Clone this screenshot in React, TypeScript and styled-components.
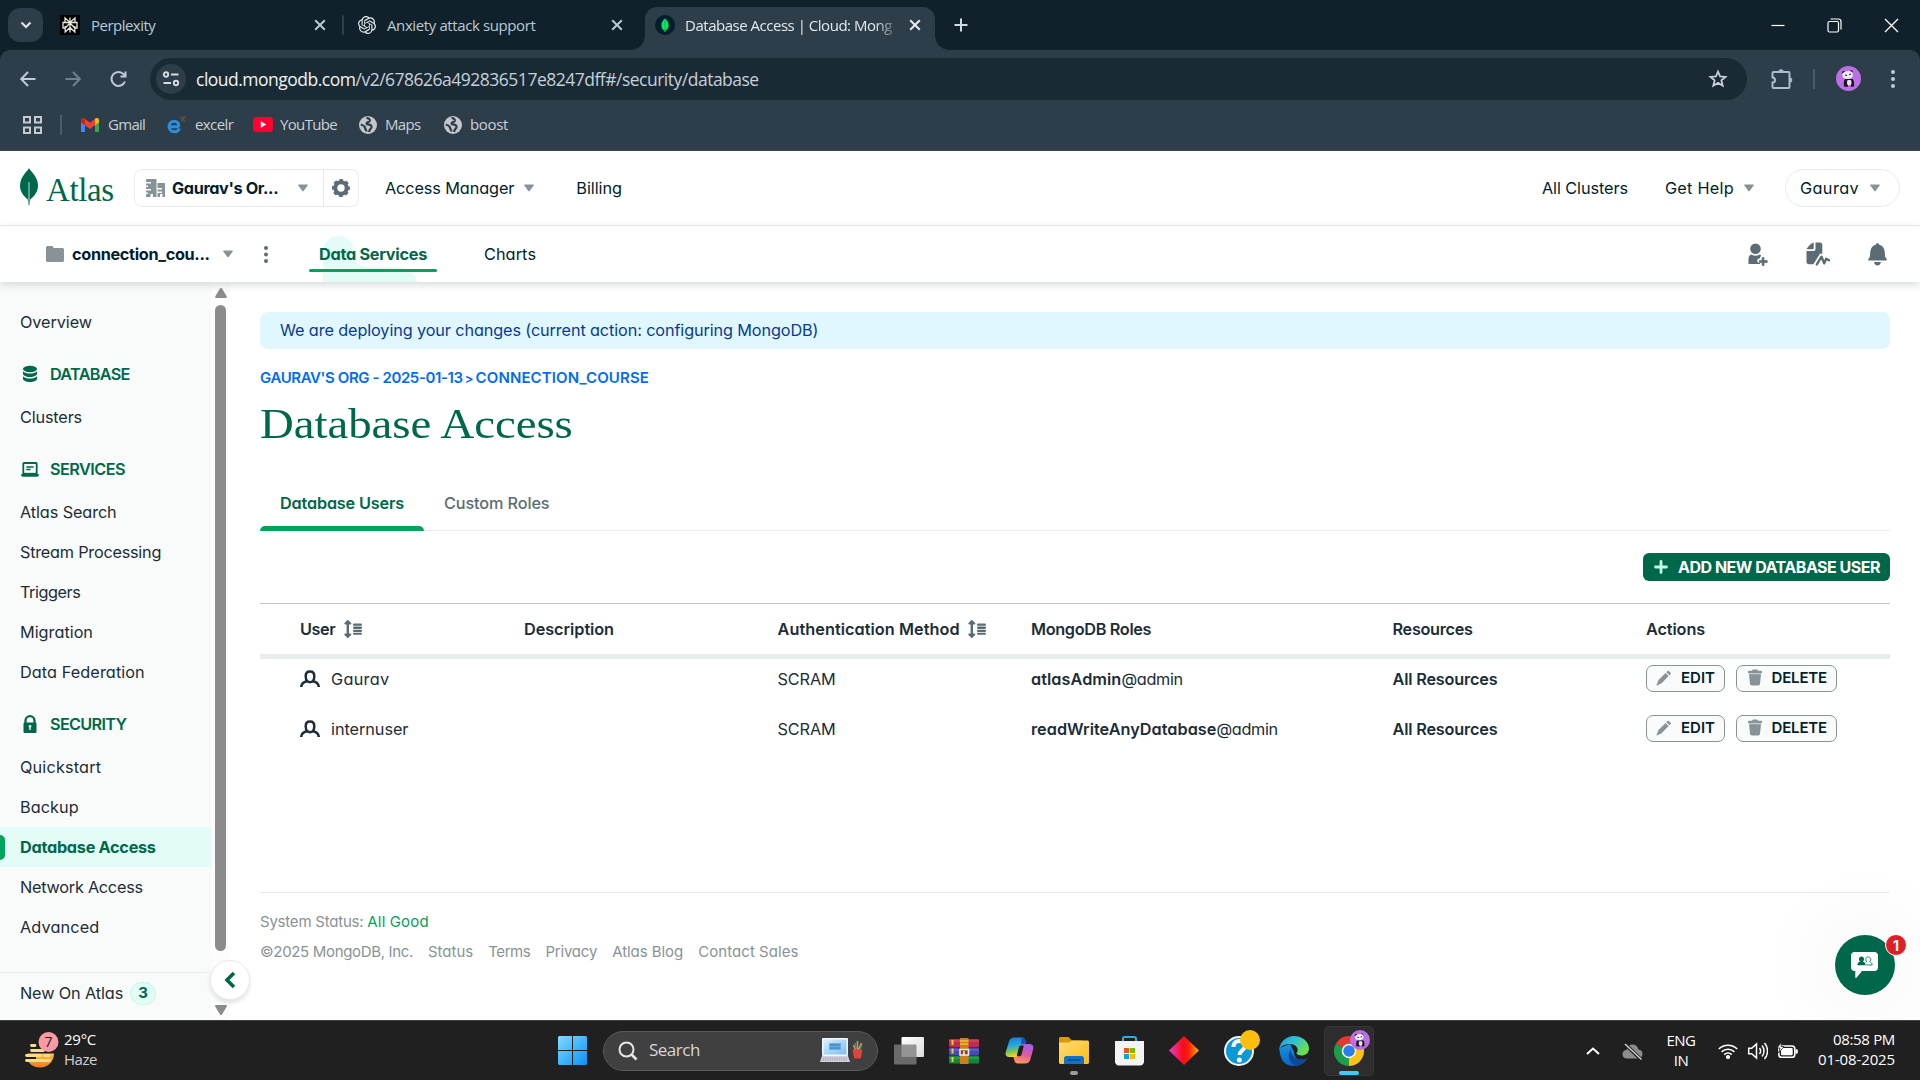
import React from "react";
import styled, { createGlobalStyle } from "styled-components";

const sans = `Inter, "Liberation Sans", sans-serif`;
const ui = `"Open Sans", "Noto Sans", sans-serif`;

const color = {
  ink: "#001e2b",
  body: "#1c2d38",
  green: "#00684a",
  brightGreen: "#00a35c",
  mint: "#e3fcf7",
  gray: "#5c6c75",
  lightGray: "#889397",
  line: "#e8edeb",
};

const GlobalStyle = createGlobalStyle`
  * { box-sizing: border-box; }
  body { margin: 0; background: #fff; overflow: hidden; }
  svg { display: block; flex: none; }
`;

const Screen = styled.div`
  width: 1920px;
  height: 1080px;
  display: flex;
  flex-direction: column;
  overflow: hidden;
  font-family: ${sans};
  font-size: 16.25px;
  color: ${color.ink};
  white-space: nowrap;
`;

const Text = styled.span<{ $ls?: number; $w?: number; $c?: string }>`
  font-feature-settings: "cv11";
  letter-spacing: ${(p) => p.$ls ?? 0}px;
  ${(p) => p.$w && `font-weight: ${p.$w};`}
  ${(p) => p.$c && `color: ${p.$c};`}
`;

/* ---------- browser ---------- */

const TabStrip = styled.div`
  height: 50px;
  flex: none;
  display: flex;
  align-items: flex-end;
  background: #10212b;
  font: 15px ${ui};
  color: #b9c9d6;
`;

const TabSearch = styled.div`
  width: 35px;
  height: 34px;
  margin: 0 10px 8px 8px;
  border-radius: 12px;
  background: #2d3d49;
  display: grid;
  place-items: center;
`;

const Tab = styled.div<{ $width: number; $active?: boolean }>`
  position: relative;
  width: ${(p) => p.$width}px;
  height: 43px;
  padding: 0 12px 7px 7px;
  display: flex;
  align-items: center;
  border-radius: 12px 12px 0 0;
  background: ${(p) => (p.$active ? "#2d3d49" : "transparent")};
  color: ${(p) => (p.$active ? "#e3e8ec" : "#b9c9d6")};
  &::before,
  &::after {
    content: "";
    display: ${(p) => (p.$active ? "block" : "none")};
    position: absolute;
    bottom: 0;
    width: 14px;
    height: 14px;
  }
  &::before {
    left: -14px;
    background: radial-gradient(circle at 0 0, transparent 13.5px, #2d3d49 14px);
  }
  &::after {
    right: -14px;
    background: radial-gradient(circle at 100% 0, transparent 13.5px, #2d3d49 14px);
  }
`;

const TabTitle = styled.span<{ $ls: number; $fade?: boolean }>`
  flex: 1;
  margin-left: ${(p) => (p.$fade ? 10 : 11)}px;
  letter-spacing: ${(p) => p.$ls}px;
  ${(p) => p.$fade && "mask-image: linear-gradient(90deg, #000 85%, transparent 96%);"}
`;

const TabDivider = styled.div`
  width: 2px;
  height: 20px;
  margin-bottom: 15px;
  border-radius: 1px;
  background: #2d3d49;
`;

const NewTab = styled.div`
  padding: 0 0 18px 19px;
`;

const WindowButtons = styled.div`
  margin-left: auto;
  padding: 0 21px 17px 0;
  display: flex;
  align-items: center;
  gap: 42px;
`;

const ToolbarBack = styled.div`
  background: #10212b;
  flex: none;
`;

const Toolbar = styled.div`
  height: 58px;
  padding: 0 17px 0 17px;
  display: flex;
  align-items: center;
  background: #2d3d49;
  border-radius: 10px 10px 0 0;
`;

const NavButtons = styled.div`
  width: 133px;
  display: flex;
  gap: 23px;
`;

const AddressBar = styled.div`
  width: 1597px;
  height: 42px;
  padding: 0 19px 0 6px;
  display: flex;
  align-items: center;
  border-radius: 21px;
  background: #1a2a35;
  font: 17.5px ${ui};
  color: #c5d0d8;
`;

const SiteInfo = styled.div`
  width: 30px;
  height: 30px;
  margin-right: 10px;
  border-radius: 50%;
  background: #2d3d49;
  display: grid;
  place-items: center;
`;

const Url = styled.span`
  flex: 1;
  letter-spacing: -0.5px;
  b {
    font-weight: 400;
    color: #eef2f4;
  }
`;

const ToolbarActions = styled.div`
  flex: 1;
  margin-left: 22px;
  padding-bottom: 1px;
  display: flex;
  align-items: center;
`;

const ToolbarDivider = styled.div<{ $m: string }>`
  width: 2px;
  height: 20px;
  margin: ${(p) => p.$m};
  background: #4b5b67;
`;

const Bookmarks = styled.div`
  height: 43px;
  flex: none;
  padding: 0 0 9px 23px;
  display: flex;
  align-items: center;
  background: #2d3d49;
  border-bottom: 1px solid #3c4450;
  font: 15px ${ui};
  color: #c9d1d8;
`;

const Bookmark = styled.div<{ $width: number; $gap?: number }>`
  width: ${(p) => p.$width}px;
  display: flex;
  align-items: center;
  gap: ${(p) => p.$gap ?? 9}px;
  span {
    padding-bottom: 2px;
  }
`;

/* ---------- Atlas header ---------- */

const OrgBar = styled.header`
  height: 75px;
  flex: none;
  padding: 0 20px;
  display: flex;
  align-items: center;
  border-bottom: 1px solid ${color.line};
`;

const Brand = styled.div`
  width: 114px;
  display: flex;
  align-items: center;
  gap: 8px;
  font: 33px/34px "Liberation Serif", serif;
  color: ${color.green};
  svg {
    margin-bottom: 3px;
  }
  span {
    padding-top: 4px;
  }
`;

const OrgPicker = styled.div`
  width: 225px;
  height: 38px;
  display: flex;
  border: 1px solid ${color.line};
  border-radius: 8px;
`;

const OrgName = styled.div`
  width: 189px;
  padding: 0 15px 0 11px;
  display: flex;
  align-items: center;
  gap: 6px;
  border-right: 1px solid ${color.line};
  svg:last-child {
    margin-left: auto;
  }
`;

const OrgSettings = styled.div`
  flex: 1;
  display: grid;
  place-items: center;
`;

const MenuItem = styled.div<{ $ml: number; $gap?: number }>`
  margin-left: ${(p) => p.$ml}px;
  display: flex;
  align-items: center;
  gap: ${(p) => p.$gap ?? 9}px;
`;

const OrgRight = styled.div`
  margin-left: auto;
  display: flex;
  align-items: center;
`;

const UserPill = styled.div`
  width: 115px;
  height: 38px;
  margin-left: 31px;
  padding: 0 19px 0 14px;
  display: flex;
  align-items: center;
  justify-content: space-between;
  border: 1px solid ${color.line};
  border-radius: 19px;
`;

const ProjectBar = styled.nav`
  position: relative;
  z-index: 1;
  height: 56px;
  flex: none;
  padding: 0 33px 0 46px;
  display: flex;
  align-items: stretch;
  background: #fff;
  box-shadow: 0 3px 8px rgba(0, 30, 43, 0.16);
`;

const ProjectPicker = styled.div`
  width: 187px;
  display: flex;
  align-items: center;
  gap: 8px;
  svg:last-child {
    margin-left: auto;
  }
`;

const ProjectMenu = styled.div`
  width: 76px;
  padding-left: 31px;
  display: flex;
  align-items: center;
`;

const ServiceTab = styled.div<{ $active?: boolean }>`
  position: relative;
  width: ${(p) => (p.$active ? 128 : 98)}px;
  margin-left: ${(p) => (p.$active ? 0 : 24)}px;
  display: flex;
  align-items: center;
  justify-content: center;
  color: ${(p) => (p.$active ? color.green : color.ink)};
  &::after {
    content: "";
    display: ${(p) => (p.$active ? "block" : "none")};
    position: absolute;
    left: 0;
    right: 0;
    bottom: 10px;
    height: 3px;
    border-radius: 2px;
    background: ${color.brightGreen};
  }
  span {
    position: relative;
  }
`;

const Blob = styled.svg`
  position: absolute;
  left: 14px;
  bottom: 0;
`;

const ProjectIcons = styled.div`
  margin-left: auto;
  display: flex;
  align-items: center;
  gap: 38px;
  color: ${color.gray};
`;

/* ---------- body ---------- */

const Body = styled.div`
  flex: 1;
  min-height: 0;
  display: flex;
`;

const Sidebar = styled.aside`
  width: 211px;
  display: flex;
  flex-direction: column;
  padding-top: 20px;
  background: #f9fbfa;
`;

const SideItem = styled.a<{ $active?: boolean }>`
  height: 40px;
  flex: none;
  padding-left: 20px;
  display: flex;
  align-items: center;
  position: relative;
  background: ${(p) => (p.$active ? color.mint : "transparent")};
  color: ${(p) => (p.$active ? color.green : color.body)};
  font-weight: ${(p) => (p.$active ? 700 : 400)};
  &::before {
    content: "";
    display: ${(p) => (p.$active ? "block" : "none")};
    position: absolute;
    left: 0;
    width: 5px;
    height: 25px;
    border-radius: 0 6px 6px 0;
    background: ${color.brightGreen};
  }
`;

const SideHeading = styled.div`
  height: 55px;
  flex: none;
  padding: 9px 0 0 20px;
  display: flex;
  align-items: center;
  gap: 10px;
  font-weight: 600;
  color: ${color.green};
`;

const SideFooter = styled.div`
  flex: 1;
  margin-top: 25px;
  padding: 7px 0 0 20px;
  border-top: 1px solid ${color.line};
  display: flex;
  gap: 7px;
  line-height: 27px;
  color: ${color.body};
`;

const CountBadge = styled.span`
  width: 26px;
  height: 23px;
  margin-top: 2px;
  border: 1px solid #c0fae6;
  border-radius: 12px;
  background: ${color.mint};
  color: ${color.green};
  font-size: 15px;
  font-weight: 700;
  line-height: 20px;
  text-align: center;
`;

const ScrollTrack = styled.div`
  position: relative;
  width: 19px;
  padding: 6px 0 5px;
  display: flex;
  flex-direction: column;
  align-items: center;
  background: #fcfcfc;
`;

const ScrollThumb = styled.div`
  width: 11px;
  height: 646px;
  margin: 7px 0 54px;
  border-radius: 6px;
  background: #8b8b8b;
`;

const Collapse = styled.div`
  position: absolute;
  left: -1px;
  top: 678px;
  width: 40px;
  height: 40px;
  border: 1px solid ${color.line};
  border-radius: 50%;
  background: #fff;
  box-shadow: 0 3px 4px rgba(0, 30, 43, 0.12);
  display: grid;
  place-items: center;
`;

const Main = styled.main`
  flex: 1;
  padding: 30px 30px 0 30px;
  display: flex;
  flex-direction: column;
  color: ${color.body};
`;

const Banner = styled.div`
  height: 37px;
  padding: 0 0 1px 20px;
  display: flex;
  align-items: center;
  border-radius: 8px;
  background: #e1f7ff;
  color: #083c90;
`;

const Breadcrumb = styled.div`
  height: 18px;
  margin-top: 20px;
  display: flex;
  line-height: 18px;
  font-size: 15px;
  font-weight: 600;
  color: #016bf8;
`;

const Crumb = styled(Text)`
  &:nth-child(2) {
    width: 13px;
    font-size: 13px;
    text-align: center;
  }
`;

const Title = styled.h1`
  align-self: flex-start;
  height: 50px;
  margin: 13px 0 0;
  font: 400 42px/49px "Liberation Serif", serif;
  color: ${color.green};
  transform: scaleX(1.113);
  transform-origin: left;
`;

const Tabs = styled.div`
  height: 54px;
  margin-top: 27px;
  display: flex;
  border-bottom: 1px solid ${color.line};
`;

const PageTab = styled.div<{ $active?: boolean }>`
  height: 54px;
  padding: 0 20px;
  line-height: 52px;
  font-weight: ${(p) => (p.$active ? 600 : 500)};
  color: ${(p) => (p.$active ? color.green : color.gray)};
  position: relative;
  &::after {
    content: "";
    display: ${(p) => (p.$active ? "block" : "none")};
    position: absolute;
    left: 0;
    right: 0;
    bottom: 0;
    height: 5px;
    border-radius: 5px 5px 0 0;
    background: ${color.brightGreen};
  }
`;

const AddButton = styled.button`
  align-self: flex-end;
  width: 247px;
  height: 28px;
  margin: 22px 0 22px;
  padding: 0 10px 0 11px;
  display: flex;
  align-items: center;
  justify-content: space-between;
  border: 0;
  border-radius: 6px;
  background: ${color.green};
  color: #fff;
  font: 700 16px ${sans};
  white-space: nowrap;
`;

const GridRow = styled.div`
  display: grid;
  grid-template-columns: 224px 253.5px 253.5px 361.5px 253.5px 1fr;
  align-items: center;
  height: 50px;
  padding-left: 40px;
`;

const HeadRow = styled(GridRow)`
  height: 56px;
  padding-bottom: 0;
  border-top: 1px solid #c1c7c6;
  border-bottom: 5px solid ${color.line};
  font-weight: 600;
`;

const Table = styled.div`
  flex: none;
  height: 290px;
  border-bottom: 1px solid ${color.line};
`;

const Rows = styled.div`
  margin-top: -5px;
`;

const Cell = styled.div<{ $gap?: number }>`
  display: flex;
  align-items: center;
  gap: ${(p) => p.$gap ?? 0}px;
`;

const RowButton = styled.button<{ $width: number }>`
  width: ${(p) => p.$width}px;
  height: 27px;
  margin-top: -2px;
  padding: 0 9px 1px 9px;
  display: flex;
  align-items: center;
  justify-content: space-between;
  border: 1px solid ${color.lightGray};
  border-radius: 7px;
  background: #f9fbfa;
  color: ${color.ink};
  font: 600 15px ${sans};
`;

const Footer = styled.footer`
  padding-top: 14px;
  font-size: 15px;
  line-height: 30px;
  color: ${color.lightGray};
`;

const FooterLinks = styled.div`
  display: flex;
  gap: 15px;
`;

const Chat = styled.div`
  position: absolute;
  left: 1835px;
  top: 935px;
  width: 60px;
  height: 60px;
  border-radius: 50%;
  background: ${color.green};
  box-shadow: 0 0 90px rgba(0, 0, 0, 0.1);
  display: grid;
  place-items: center;
`;

const ChatBadge = styled.div`
  position: absolute;
  left: 50px;
  top: -1px;
  width: 22px;
  height: 22px;
  border: 1px solid #fff;
  border-radius: 50%;
  background: #df1f26;
  color: #fff;
  font-size: 14px;
  font-weight: 700;
  line-height: 21px;
  text-align: center;
`;

/* ---------- taskbar ---------- */

const Taskbar = styled.div`
  position: relative;
  z-index: 2;
  height: 60px;
  flex: none;
  display: flex;
  align-items: center;
  border-top: 1px solid #3b4144;
  background: #202020;
  color: #fff;
  font: 15px/20px ${ui};
`;

const Weather = styled.div`
  width: 558px;
  padding-left: 24px;
  display: flex;
  align-items: center;
  gap: 4px;
`;

const WeatherText = styled.div`
  padding-bottom: 4px;
  display: flex;
  flex-direction: column;
  font-size: 15px;
`;

const SearchBox = styled.div`
  width: 275px;
  height: 40px;
  margin: 0 1px 0 16px;
  padding: 0 13px 0 14px;
  display: flex;
  align-items: center;
  border: 1px solid #585858;
  border-radius: 20px;
  background: #404040;
  font-size: 17px;
  color: #d6d6d6;
  svg:last-child {
    margin-left: auto;
  }
  span {
    margin: 0 0 1px 11px;
  }
`;

const AppIcon = styled.div<{ $active?: boolean; $run?: string }>`
  position: relative;
  width: 50px;
  height: 50px;
  margin-left: 5px;
  display: grid;
  place-items: center;
  border-radius: 5px;
  border: 1px solid ${(p) => (p.$active ? "#363636" : "transparent")};
  background: ${(p) => (p.$active ? "#2d2d2d" : "transparent")};
  &::after {
    content: "";
    display: ${(p) => (p.$run ? "block" : "none")};
    position: absolute;
    bottom: 0;
    width: ${(p) => (p.$active ? 20 : 8)}px;
    height: 4px;
    border-radius: 2px;
    background: ${(p) => p.$run};
  }
`;

const Tray = styled.div`
  margin-left: auto;
  padding-right: 25px;
  display: flex;
  align-items: center;
`;

const TrayText = styled.div<{ $align: string; $ml: number; $up: number }>`
  width: ${(p) => (p.$align === "right" ? 97 : 40)}px;
  margin-left: ${(p) => p.$ml}px;
  padding-bottom: ${(p) => p.$up}px;
  display: flex;
  flex-direction: column;
  text-align: ${(p) => p.$align};
`;

const Spacer = styled.span<{ $w: number }>`
  flex: none;
  width: ${(p) => p.$w}px;
`;

/* ---------- icons ---------- */

const CloseIcon = ({ c = "#b9c9d6" }) => (
  <svg width="12" height="12" viewBox="0 0 12 12" stroke={c} strokeWidth="2">
    <path d="M1.2 1.2l9.6 9.6M10.8 1.2L1.2 10.8" />
  </svg>
);

const Caret = () => (
  <svg width="10" height="8" viewBox="0 0 10 8" fill={color.lightGray}>
    <path d="M.8.5h8.4c.6 0 .9.6.5 1.1L5.6 7.1a.8.8 0 0 1-1.2 0L.3 1.6C-.1 1.1.2.5.8.5z" />
  </svg>
);

const Dots = ({ c, h = 18 }: { c: string; h?: number }) => (
  <svg width="4" height={h} viewBox={`0 0 4 ${h}`} fill={c}>
    <circle cx="2" cy="2" r="2" />
    <circle cx="2" cy={h / 2} r="2" />
    <circle cx="2" cy={h - 2} r="2" />
  </svg>
);

const PerplexityIcon = () => (
  <svg width="20" height="20" viewBox="0 0 20 20">
    <rect width="20" height="20" rx="1" fill="#000" />
    <path
      d="M10 2.500v15M5 3l5 4.500L15 3v4.500H5zM5 7.500H3V13h2.200L10 8l4.800 5H17V7.500h-2M5.200 11v6L10 12.500l4.800 4.500v-6"
      fill="none"
      stroke="#e8e6da"
      strokeWidth="1.300"
    />
  </svg>
);

const OpenAIIcon = () => (
  <svg width="18" height="18" viewBox="0 0 24 24" fill="#e4ebef">
    <path d="M22.282 9.821a5.985 5.985 0 0 0-.516-4.910 6.046 6.046 0 0 0-6.510-2.900A6.065 6.065 0 0 0 4.981 4.180a5.985 5.985 0 0 0-3.998 2.900 6.046 6.046 0 0 0 .743 7.097 5.980 5.980 0 0 0 .510 4.911 6.051 6.051 0 0 0 6.515 2.900A5.985 5.985 0 0 0 13.260 24a6.056 6.056 0 0 0 5.772-4.206 5.990 5.990 0 0 0 3.997-2.900 6.056 6.056 0 0 0-.747-7.073zM13.260 22.430a4.476 4.476 0 0 1-2.876-1.040l.141-.081 4.779-2.758a.795.795 0 0 0 .392-.681v-6.737l2.020 1.168a.071.071 0 0 1 .038.052v5.583a4.504 4.504 0 0 1-4.494 4.494zM3.600 18.304a4.470 4.470 0 0 1-.535-3.014l.142.085 4.783 2.759a.771.771 0 0 0 .780 0l5.843-3.369v2.332a.080.080 0 0 1-.033.062L9.740 19.950a4.500 4.500 0 0 1-6.140-1.646zM2.340 7.896a4.485 4.485 0 0 1 2.366-1.973V11.600a.766.766 0 0 0 .388.676l5.815 3.355-2.020 1.168a.076.076 0 0 1-.071 0l-4.830-2.786A4.504 4.504 0 0 1 2.340 7.872zm16.597 3.855l-5.833-3.387L15.119 7.200a.076.076 0 0 1 .071 0l4.830 2.791a4.494 4.494 0 0 1-.676 8.105v-5.678a.790.790 0 0 0-.407-.667zm2.010-3.023l-.141-.085-4.774-2.782a.776.776 0 0 0-.785 0L9.409 9.230V6.897a.066.066 0 0 1 .028-.061l4.830-2.787a4.500 4.500 0 0 1 6.680 4.660zm-12.640 4.135l-2.020-1.164a.080.080 0 0 1-.038-.057V6.075a4.500 4.500 0 0 1 7.375-3.453l-.142.080L8.704 5.460a.795.795 0 0 0-.393.681zm1.097-2.365l2.602-1.500 2.607 1.500v2.999l-2.597 1.500-2.607-1.500z" />
  </svg>
);

const MongoFavicon = () => (
  <svg width="20" height="20" viewBox="0 0 20 20">
    <circle cx="10" cy="10" r="10" fill="#001e2b" />
    <path d="M10 3.300c2.200 2.300 3.600 4.500 3.600 7 0 2.300-1.200 4.200-3.100 5.500l-.2 1.200h-.6l-.2-1.200c-1.900-1.300-3.100-3.200-3.100-5.500 0-2.500 1.400-4.700 3.600-7z" fill="#00ed64" />
    <path d="M10 4v13" stroke="#00a651" strokeWidth=".8" />
  </svg>
);

const GlobeIcon = () => (
  <svg width="18" height="18" viewBox="0 0 18 18">
    <circle cx="9" cy="9" r="9" fill="#c3c7ca" />
    <path d="M7.500 1.800c2 .3 3.800 1.300 3.300 3.200-.5 1.500-2.800.8-3.200 2.300-.2 1 .8 1.400 2.200 1.400 1.800 0 3 .9 2.700 2.500-.3 1.700-2.200 1.600-2.400 4.800M1.800 8.500c1.800.6 4.200 1.500 4.200 3.200 0 1.200 1.600 1.800 1.300 3.800" fill="none" stroke="#2d3d49" strokeWidth="2.200" />
  </svg>
);

const SortIcon = () => (
  <svg width="18" height="18" viewBox="0 0 18 18" fill={color.gray}>
    <path d="M4.400.3a.8.8 0 0 0-1.200 0L.5 3.100c-.5.5-.1 1.300.6 1.300h1.500v9.200H1.100c-.7 0-1.100.8-.6 1.300l2.700 2.800c.3.400.9.400 1.200 0l2.700-2.800c.5-.5.100-1.300-.6-1.300H5V4.400h1.500c.7 0 1.100-.8.600-1.300z" />
    <rect x="9" y="3.500" width="9" height="2.300" rx="1.100" />
    <rect x="9" y="6.600" width="9" height="2.300" rx="1.100" />
    <rect x="9" y="9.700" width="9" height="2.300" rx="1.100" />
    <rect x="9" y="12.800" width="9" height="1.900" rx=".9" />
  </svg>
);

const UserIcon = () => (
  <svg width="20" height="18" viewBox="0 0 20 18" fill="none" stroke={color.body} strokeWidth="2.500">
    <path d="M1.200 17c.3-3.700 2.900-5.200 6.200-5.700C6 10 5.700 8.300 5.700 6.200 5.700 3.300 7.500 1.500 10 1.500s4.300 1.800 4.300 4.700c0 2.100-.3 3.800-1.700 5.100 3.300.5 5.900 2 6.200 5.700M7.400 11.300c1.500 1 3.700 1 5.200 0" />
  </svg>
);

const PencilIcon = () => (
  <svg width="16" height="16" viewBox="0 0 16 16" fill={color.lightGray}>
    <path d="M11.500 1.100a1 1 0 0 1 1.400 0l1.700 1.700a1 1 0 0 1 0 1.400l-1.100 1.100-3.100-3.100zM9.600 3l3.100 3.100-7.100 7.100L1 15.400a.4.4 0 0 1-.5-.5l2-4.800z" />
  </svg>
);

const TrashIcon = () => (
  <svg width="14" height="17" viewBox="0 0 14 17">
    <path d="M1 5h12l-1 9.800c-.1 1-.9 1.700-1.800 1.700H3.800c-.9 0-1.700-.7-1.800-1.700z" fill={color.lightGray} />
    <path d="M0 2.900c0-.7.5-1.200 1.200-1.200h2.600L5 .5h4l1.200 1.200h2.600c.7 0 1.200.5 1.200 1.200V4H0z" fill={color.lightGray} />
    <path d="M.8 4h12.400v1.300H.8z" fill="#c5cccd" />
  </svg>
);

const Panda = ({ r }: { r: number }) => (
  <svg width={r * 2} height={r * 2} viewBox="0 0 26 26">
    <circle cx="13" cy="13" r="13" fill="#bb6fe4" />
    <path d="M9.500 13.500h8c1.300 1.500 1.700 5 1 8h-3v-2h-3v2h-4c-.8-3-.5-6.500 1-8z" fill="#1d1620" />
    <rect x="11.500" y="14.500" width="4.500" height="5.500" rx="1.500" fill="#e9e4ea" />
    <circle cx="8" cy="6.800" r="1.600" fill="#1d1620" />
    <circle cx="16" cy="5.800" r="1.400" fill="#1d1620" />
    <path d="M7 7.500c2-2 7-3 9.500-1.500 1.500 2 1.300 5-.5 6.500-2.500 1.300-6 1.300-8 0C6.500 11.500 6.300 9 7 7.500z" fill="#efebf0" />
    <path d="M9.500 9.300l2 .6M15.500 8.300l-1.600.9" stroke="#1d1620" strokeWidth="1.200" />
  </svg>
);

/* ---------- data ---------- */

type Entry = { label: string; ls: number; active?: boolean };
const groups: { title?: string; ls?: number; icon?: string; items: Entry[] }[] = [
  { items: [{ label: "Overview", ls: -0.08 }] },
  { title: "DATABASE", ls: -0.72, icon: "db", items: [{ label: "Clusters", ls: -0.16 }] },
  {
    title: "SERVICES",
    ls: -0.55,
    icon: "services",
    items: [
      { label: "Atlas Search", ls: -0.1 },
      { label: "Stream Processing", ls: -0.24 },
      { label: "Triggers", ls: -0.45 },
      { label: "Migration", ls: 0.0 },
      { label: "Data Federation", ls: 0.08 },
    ],
  },
  {
    title: "SECURITY",
    ls: -0.68,
    icon: "lock",
    items: [
      { label: "Quickstart", ls: 0.17 },
      { label: "Backup", ls: 0.05 },
      { label: "Database Access", ls: -0.28, active: true },
      { label: "Network Access", ls: -0.25 },
      { label: "Advanced", ls: 0.14 },
    ],
  },
];

const users = [
  { name: "Gaurav", nameLs: 0.3, role: "atlasAdmin", roleLs: 0.06, domainLs: -0.32 },
  { name: "internuser", nameLs: -0.05, role: "readWriteAnyDatabase", roleLs: 0.02, domainLs: -0.32 },
];

const HeadingIcon = ({ kind }: { kind?: string }) => {
  if (kind === "db")
    return (
      <svg width="20" height="18" viewBox="0 0 20 18" fill={color.green}>
        <ellipse cx="10" cy="4" rx="7" ry="3.300" />
        <path d="M3 6.200c1.500 1.700 4 2.300 7 2.300s5.500-.6 7-2.300v2.600c0 1.800-3.100 3.200-7 3.200s-7-1.400-7-3.200z" />
        <path d="M3 11.200c1.500 1.700 4 2.300 7 2.300s5.500-.6 7-2.300v2.600c0 1.800-3.100 3.200-7 3.200s-7-1.400-7-3.200z" />
      </svg>
    );
  if (kind === "services")
    return (
      <svg width="20" height="18" viewBox="0 0 20 18">
        <path d="M3.300 14V3.700c0-.4.3-.7.7-.7h12c.4 0 .7.3.7.7V14" fill="none" stroke={color.green} strokeWidth="1.800" />
        <path d="M1.300 14h17.400v1.300c0 .8-.6 1.400-1.400 1.400H2.700c-.8 0-1.400-.6-1.400-1.400z" fill={color.green} />
        <path d="M3.300 13.600h13.400" stroke={color.green} strokeWidth="1.500" />
        <path d="M6.300 7h7.400M6.300 9.500h4.200" stroke={color.green} strokeWidth="1.300" />
      </svg>
    );
  return (
    <svg width="20" height="20" viewBox="0 0 20 20">
      <path d="M5.500 9V6.700a4.500 4.500 0 0 1 9 0V9" fill="none" stroke={color.green} strokeWidth="2.300" />
      <rect x="3.500" y="8.500" width="13" height="10.500" rx="1.300" fill={color.green} />
      <path d="M10 11a1.400 1.400 0 0 0-.7 2.600V16h1.400v-2.400A1.400 1.400 0 0 0 10 11z" fill="#f9fbfa" />
    </svg>
  );
};

/* ---------- sections ---------- */

const Browser = () => (
  <>
    <TabStrip>
      <TabSearch>
        <svg width="12" height="8" viewBox="0 0 12 8" fill="none" stroke="#dbe3e9" strokeWidth="2.200">
          <path d="M1.500 1.500L6 6l4.500-4.500" />
        </svg>
      </TabSearch>
      <Tab $width={289}>
        <PerplexityIcon />
        <TabTitle $ls={-0.52}>Perplexity</TabTitle>
        <CloseIcon />
        <Spacer $w={4} />
      </Tab>
      <TabDivider />
      <Tab $width={301}>
        <Spacer $w={7} />
        <OpenAIIcon />
        <TabTitle $ls={-0.39}>Anxiety attack support</TabTitle>
        <CloseIcon />
        <Spacer $w={10} />
      </Tab>
      <Tab $width={290} $active>
        <Spacer $w={3} />
        <MongoFavicon />
        <TabTitle $ls={-0.48} $fade>
          Database Access | Cloud: Mong
        </TabTitle>
        <CloseIcon c="#e8edf0" />
        <Spacer $w={2} />
      </Tab>
      <NewTab>
        <svg width="14" height="14" viewBox="0 0 14 14" stroke="#cddbe6" strokeWidth="2">
          <path d="M7 .5v13M.5 7h13" />
        </svg>
      </NewTab>
      <WindowButtons>
        <svg width="14" height="14" viewBox="0 0 14 14" stroke="#fff" strokeWidth="1.200">
          <path d="M.5 6.500h13" />
        </svg>
        <svg width="15" height="15" viewBox="0 0 15 15" fill="none" stroke="#fff" strokeWidth="1.200">
          <rect x="1" y="3.500" width="10.500" height="10.500" rx="1.500" />
          <path d="M3.500 1h8A2.500 2.500 0 0 1 14 3.500v8" />
        </svg>
        <svg width="15" height="15" viewBox="0 0 15 15" stroke="#fff" strokeWidth="1.300">
          <path d="M1 1l13 13M14 1L1 14" />
        </svg>
      </WindowButtons>
    </TabStrip>
    <ToolbarBack>
      <Toolbar>
        <NavButtons>
          <svg width="22" height="20" viewBox="0 0 22 20" fill="none" stroke="#bccbd7" strokeWidth="2">
            <path d="M18.500 10H4.500M11 3l-6.800 7 6.800 7" />
          </svg>
          <svg width="22" height="20" viewBox="0 0 22 20" fill="none" stroke="#70808c" strokeWidth="2">
            <path d="M3.500 10h14M11 3l6.800 7-6.800 7" />
          </svg>
          <svg width="22" height="20" viewBox="0 0 22 20" fill="none" stroke="#bccbd7" strokeWidth="2">
            <path d="M18 12.500a7 7 0 1 1-1.200-7.200L18.500 7.200M18.500 2.500v5h-5" />
          </svg>
        </NavButtons>
        <AddressBar>
          <SiteInfo>
            <svg width="18" height="16" viewBox="0 0 18 16" fill="none" stroke="#d5dde3" strokeWidth="1.900">
              <circle cx="4" cy="3.500" r="2.200" />
              <path d="M9 3.500h7.500M1.500 12h7.500" />
              <circle cx="14" cy="12" r="2.200" />
            </svg>
          </SiteInfo>
          <Url>
            <b>cloud.mongodb.com</b>/v2/678626a492836517e8247dff#/security/database
          </Url>
          <svg width="20" height="20" viewBox="0 0 20 20" fill="none" stroke="#c8d0d6" strokeWidth="1.800">
            <path d="M10 2.500l2.100 5 5.400.4-4.100 3.500 1.300 5.300L10 13.900l-4.700 2.800 1.300-5.300L2.500 7.900l5.400-.4z" />
          </svg>
        </AddressBar>
        <ToolbarActions>
          <svg width="24" height="24" viewBox="0 0 24 24" fill="none" stroke="#a9bed0" strokeWidth="2">
            <path d="M4.500 5h15c.6 0 1 .4 1 1v14c0 .6-.4 1-1 1h-15c-.6 0-1-.4-1-1v-4.500c1.500 0 2.500-1.100 2.500-2.500S5 10.500 3.500 10.500V6c0-.6.4-1 1-1z" />
            <path d="M9.500 5a2.500 2.500 0 0 1 5 0zM20.500 10.500a2.500 2.500 0 0 1 0 5z" fill="#a9bed0" strokeWidth=".6" />
          </svg>
          <ToolbarDivider $m="0 21px 0 20px" />
          <Panda r={12.5} />
          <Spacer $w={30} />
          <Dots c="#bccbd7" />
        </ToolbarActions>
      </Toolbar>
    </ToolbarBack>
    <Bookmarks>
      <svg width="19" height="18" viewBox="0 0 19 18" fill="none" stroke="#c3cbd1" strokeWidth="2">
        <path d="M1 1h6v5.500H1zM12 1h6v5.500h-6zM1 11.500h6V17H1zM12 11.500h6V17h-6z" />
      </svg>
      <ToolbarDivider $m="0 19px 0 18px" />
      <Bookmark $width={86}>
        <svg width="18" height="14" viewBox="0 0 18 14">
          <path d="M0 2v10.700c0 .7.500 1.300 1.200 1.300H4V6z" fill="#4285f4" />
          <path d="M18 2v10.700c0 .7-.5 1.300-1.200 1.300H14V6z" fill="#34a853" />
          <path d="M0 2.200C0 .3 2-.6 3.500.5L9 4.700 14.500.5C15 .2 16 .2 16 2v3.500L9 11 4 7.200 0 4.200z" fill="#ea4335" />
          <path d="M14 1l.5-.5C16-.6 18 .3 18 2.200v2L14 7.200z" fill="#fbbc04" />
          <path d="M0 2.200C0 .3 2-.6 3.500.5L4 1v6.200L0 4.200z" fill="#c5221f" />
        </svg>
        <Text $ls={-0.7}>Gmail</Text>
      </Bookmark>
      <Bookmark $width={86}>
        <svg width="19" height="20" viewBox="0 0 19 20" fill="none">
          <path d="M12.500 13.500c-1 2.300-2.700 3.300-5 3.300C4.300 16.800 2 14.500 2 11.500s2.200-5.300 5.200-5.300c2.700 0 4.500 1.700 4.500 4 0 1.300-1 1.600-2.500 1.600H3" stroke="#2b8fe0" strokeWidth="3" />
          <path d="M13.500 1.500l4.500 5M18 1l-4 5.500" stroke="#5d5147" strokeWidth="1.500" />
        </svg>
        <Text $ls={-0.6}>excelr</Text>
      </Bookmark>
      <Bookmark $width={106} $gap={7}>
        <svg width="20" height="15" viewBox="0 0 20 15">
          <rect width="20" height="15" rx="3.500" fill="#ff0033" />
          <path d="M7.800 4.300v6.400L13.300 7.500z" fill="#fff" />
        </svg>
        <Text $ls={-0.65}>YouTube</Text>
      </Bookmark>
      <Bookmark $width={85} $gap={8}>
        <GlobeIcon />
        <Text $ls={-0.7}>Maps</Text>
      </Bookmark>
      <Bookmark $width={80} $gap={8}>
        <GlobeIcon />
        <Text $ls={-0.34}>boost</Text>
      </Bookmark>
    </Bookmarks>
  </>
);

const Header = () => (
  <>
    <OrgBar>
      <Brand>
        <svg width="18" height="38" viewBox="0 0 18 38">
          <path d="M9 0c.8 2 2.300 3.200 4 5.200 3.200 4 5 8 5 12.500 0 5.300-3.200 10.500-7.700 13.500L9.500 37h-1l-.8-5.800C3.200 28.200 0 23 0 17.700 0 13.200 1.800 9.200 5 5.200 6.700 3.200 8.200 2 9 0z" fill={color.green} />
          <path d="M9 14v24" stroke="#b9d9ce" strokeWidth="1" />
        </svg>
        <Text $ls={-0.4}>Atlas</Text>
      </Brand>
      <OrgPicker>
        <OrgName>
          <svg width="20" height="18" viewBox="0 0 20 18" fill={color.lightGray}>
            <path d="M1 0h8.500c.6 0 1 .4 1 1v17H7v-3H4.500v3H0v-3h2v-1.500H0v-2h5V10H0V8h2V6.500H0v-2h5V3H0V1c0-.6.4-1 1-1zM11.500 4H18c.6 0 1 .4 1 1v13h-2.500v-3H14v3h-2.500v-4H16v-1.500h-4.500v-2H16V9h-4.500z" />
          </svg>
          <Text $ls={-0.38} $w={700}>
            Gaurav's Or...
          </Text>
          <Caret />
        </OrgName>
        <OrgSettings>
          <svg width="18" height="18" viewBox="0 0 18 18">
            <circle cx="9" cy="9" r="5.700" fill="none" stroke={color.gray} strokeWidth="4" />
            <circle cx="9" cy="9" r="8" fill="none" stroke={color.gray} strokeWidth="2" strokeDasharray="3.600 2.683" strokeDashoffset="1.800" />
          </svg>
        </OrgSettings>
      </OrgPicker>
      <MenuItem $ml={26} $gap={10}>
        <Text $ls={-0.1}>Access Manager</Text>
        <Caret />
      </MenuItem>
      <MenuItem $ml={42}>
        <Text $ls={-0.05}>Billing</Text>
      </MenuItem>
      <OrgRight>
        <MenuItem $ml={0}>
          <Text $ls={-0.08}>All Clusters</Text>
        </MenuItem>
        <MenuItem $ml={37} $gap={10}>
          <Text $ls={0.26}>Get Help</Text>
          <Caret />
        </MenuItem>
        <UserPill>
          <Text $ls={0.4}>Gaurav</Text>
          <Caret />
        </UserPill>
      </OrgRight>
    </OrgBar>
    <ProjectBar>
      <ProjectPicker>
        <svg width="18" height="16" viewBox="0 0 18 16" fill={color.lightGray}>
          <path d="M0 1.500C0 .7.700 0 1.500 0h4.200c.6 0 1.100.3 1.400.8L7.800 2h8.700c.8 0 1.500.7 1.500 1.500v11c0 .8-.7 1.500-1.500 1.500h-15C.7 16 0 15.300 0 14.500z" />
        </svg>
        <Text $ls={-0.32} $w={700}>
          connection_cou...
        </Text>
        <Caret />
      </ProjectPicker>
      <ProjectMenu>
        <Dots c={color.gray} h={17} />
      </ProjectMenu>
      <ServiceTab $active>
        <Blob width="94" height="46" viewBox="0 0 94 46">
          <path d="M0 46V15.500a15.500 15.500 0 0 1 31 0v3C31 26 37 31 44 31h28c12 0 22 6 22 15z" fill={color.mint} />
        </Blob>
        <Text $ls={-0.28} $w={700}>
          Data Services
        </Text>
      </ServiceTab>
      <ServiceTab>
        <Text $ls={0.1}>Charts</Text>
      </ServiceTab>
      <ProjectIcons>
        <svg width="20" height="23" viewBox="0 0 20 23" fill="currentColor">
          <circle cx="7.500" cy="5.800" r="5.300" />
          <path d="M3.500 11.500c2.300 1.700 5.700 1.700 8 0 .8.200 1.500.8 1.800 1.700-.8.200-1.300.8-1.300 1.600v.8h-.8c-2.500 0-2.500 4.400 0 4.400h.8V21H.5v-5c0-2.500 1-4 3-4.500z" />
          <path d="M14.200 14.500h1.800v2.900h3.200v2.200H16v3.200h-1.800v-3.200h-2.900v-2.200h2.900z" stroke="currentColor" strokeWidth=".7" />
        </svg>
        <svg width="24" height="24" viewBox="0 0 24 24" fill="none">
          <path d="M7.700.5V6c0 .8-.5 1.300-1.300 1.300H.5C2 4.500 4.500 1.500 7.700.5zM9.500.5h4.500c1.300 0 2.300 1 2.300 2.300v19.400H2.800C1.500 22.200.5 21.200.5 20V9h7c1.200 0 2-.8 2-2z" fill="currentColor" />
          <path d="M9.500 23.500l5.800-9.300 2.700 6.600 2.200-4.500 3.800 2V24z" fill="#fff" stroke="#fff" strokeWidth="5" strokeLinejoin="round" />
          <path d="M10.800 22.500l4.700-7.800 2.700 6.600 2-4.500L23 18.300" stroke="currentColor" strokeWidth="2.400" strokeLinejoin="round" strokeLinecap="round" />
        </svg>
        <svg width="19" height="23" viewBox="0 0 19 23" fill="currentColor">
          <path d="M9.500.3c.8 0 1.400.5 1.600 1.400 3.400.7 5.300 3.300 5.600 7l.4 5 1.600 2.400c.4.700 0 1.400-.8 1.400H1.100c-.8 0-1.200-.7-.8-1.400l1.600-2.400.4-5c.3-3.700 2.200-6.300 5.600-7C8.100.8 8.700.3 9.500.3zM6 19h7c-.3 2-1.600 3.400-3.500 3.400S6.300 21 6 19z" />
        </svg>
      </ProjectIcons>
    </ProjectBar>
  </>
);

const SideNav = () => (
  <>
    <Sidebar>
      {groups.map((g, i) => (
        <React.Fragment key={i}>
          {g.title && (
            <SideHeading>
              <HeadingIcon kind={g.icon} />
              <Text $ls={g.ls}>{g.title}</Text>
            </SideHeading>
          )}
          {g.items.map((it) => (
            <SideItem key={it.label} $active={it.active}>
              <Text $ls={it.ls}>{it.label}</Text>
            </SideItem>
          ))}
        </React.Fragment>
      ))}
      <SideFooter>
        <Text $ls={-0.12}>New On Atlas</Text>
        <CountBadge>3</CountBadge>
      </SideFooter>
    </Sidebar>
    <ScrollTrack>
      <svg width="12" height="10" viewBox="0 0 12 10" fill="#8b8b8b">
        <path d="M6 0c.5 0 .8.300 1 .6l4.800 8c.3.700 0 1.400-.8 1.400H1c-.8 0-1.100-.7-.8-1.400l4.800-8C5.200.3 5.500 0 6 0z" />
      </svg>
      <ScrollThumb />
      <svg width="12" height="10" viewBox="0 0 12 10" fill="#8b8b8b">
        <path d="M6 10c.5 0 .8-.300 1-.6l4.800-8C12.100.7 11.800 0 11 0H1C.2 0-.1.7.2 1.400l4.800 8c.2.300.5.600 1 .6z" />
      </svg>
      <Collapse>
        <svg width="12" height="18" viewBox="0 0 12 18" fill="none" stroke={color.green} strokeWidth="3.600">
          <path d="M10 2L3 9l7 7" />
        </svg>
      </Collapse>
    </ScrollTrack>
  </>
);

const Content = () => (
  <Main>
    <Banner>
      <Text $ls={-0.12}>We are deploying your changes (current action: configuring MongoDB)</Text>
    </Banner>
    <Breadcrumb>
      <Crumb $ls={-0.4}>GAURAV'S ORG - 2025-01-13</Crumb>
      <Crumb>&gt;</Crumb>
      <Crumb $ls={0.12}>CONNECTION_COURSE</Crumb>
    </Breadcrumb>
    <Title>Database Access</Title>
    <Tabs>
      <PageTab $active>
        <Text $ls={-0.17}>Database Users</Text>
      </PageTab>
      <PageTab>
        <Text $ls={-0.12}>Custom Roles</Text>
      </PageTab>
    </Tabs>
    <AddButton>
      <svg width="14" height="14" viewBox="0 0 14 14" stroke="#c0fae6" strokeWidth="2.800" strokeLinecap="round">
        <path d="M7 1.500v11M1.500 7h11" />
      </svg>
      <Text $ls={-0.5}>ADD NEW DATABASE USER</Text>
    </AddButton>
    <Table>
      <HeadRow>
        <Cell $gap={9}>
          <Text $ls={-0.4}>User</Text>
          <SortIcon />
        </Cell>
        <Text $ls={-0.05}>Description</Text>
        <Cell $gap={8}>
          <Text $ls={0.06}>Authentication Method</Text>
          <SortIcon />
        </Cell>
        <Text $ls={-0.33}>MongoDB Roles</Text>
        <Text $ls={-0.3}>Resources</Text>
        <Text $ls={-0.11}>Actions</Text>
      </HeadRow>
      <Rows>
        {users.map((u) => (
          <GridRow key={u.name}>
            <Cell $gap={11}>
              <UserIcon />
              <Text $ls={u.nameLs}>{u.name}</Text>
            </Cell>
            <span />
            <Text $ls={-0.1}>SCRAM</Text>
            <span>
              <Text $ls={u.roleLs} $w={600}>
                {u.role}
              </Text>
              <Text $ls={u.domainLs}>@admin</Text>
            </span>
            <Text $ls={-0.18} $w={600}>
              All Resources
            </Text>
            <Cell $gap={11}>
              <RowButton $width={79}>
                <PencilIcon />
                <Text $ls={0.02}>EDIT</Text>
              </RowButton>
              <RowButton $width={101}>
                <Spacer $w={1} />
                <TrashIcon />
                <Spacer $w={8} />
                <Text $ls={-0.16}>DELETE</Text>
              </RowButton>
            </Cell>
          </GridRow>
        ))}
      </Rows>
    </Table>
    <Footer>
      <div>
        <Text $ls={-0.22}>System Status: </Text>
        <Text $ls={0.15} $c={color.brightGreen}>
          All Good
        </Text>
      </div>
      <FooterLinks>
        <Text $ls={-0.34}>©2025 MongoDB, Inc.</Text>
        <Text $ls={0}>Status</Text>
        <Text $ls={-0.4}>Terms</Text>
        <Text $ls={-0.2}>Privacy</Text>
        <Text $ls={-0.05}>Atlas Blog</Text>
        <Text $ls={0.06}>Contact Sales</Text>
      </FooterLinks>
    </Footer>
  </Main>
);

const ChatButton = () => (
  <Chat>
    <svg width="30" height="28" viewBox="0 0 30 28">
      <path d="M4.500 1h20c2 0 3.500 1.500 3.500 3.500v12c0 2-1.500 3.500-3.500 3.500H12l-5.500 6.800c-.5.500-1.200.2-1.200-.5V20H4.500C2.500 20 1 18.500 1 16.500v-12C1 2.500 2.500 1 4.500 1z" fill="#fff" />
      <path d="M11.500 5.500a2.700 2.700 0 0 1 1.300 5c1.700.6 2.700 1.500 2.900 3.700H7.300c.2-2.200 1.200-3.100 2.900-3.700a2.700 2.700 0 0 1 1.300-5z" fill={color.green} />
      <path d="M16 14h6.200c-.2-2-1.200-2.800-2.700-3.400a2.500 2.500 0 1 0-2.400 0l-1.200.7" fill="none" stroke={color.green} strokeWidth=".8" />
    </svg>
    <ChatBadge>1</ChatBadge>
  </Chat>
);

const WindowsTaskbar = () => (
  <Taskbar>
    <Weather>
      <svg width="36" height="38" viewBox="0 0 36 38">
        <defs>
          <linearGradient id="sun" x1="0" y1="0" x2="0" y2="1">
            <stop offset="0" stopColor="#ffc53a" />
            <stop offset="1" stopColor="#f07a1c" />
          </linearGradient>
        </defs>
        <path d="M3.500 21.500h26.500c0 8-6 14-14 14-6 0-10.500-3-12-7h8v-3.500h-8z" fill="url(#sun)" />
        <path d="M7.500 13.500h3.500M7.500 18.500h12M2.500 23.500h14M20.500 23.500h4.500M2.500 28.500h23" stroke="#fbdc8c" strokeWidth="2.800" strokeLinecap="round" />
        <circle cx="24.500" cy="10" r="10" fill="#ff99a4" />
        <text x="24.500" y="15" fontSize="14" fill="#1b1b1b" textAnchor="middle" fontFamily="Open Sans, sans-serif">
          7
        </text>
      </svg>
      <WeatherText>
        <Text $ls={-0.26}>29°C</Text>
        <Text $ls={-0.46} $c="#d0d0d0">
          Haze
        </Text>
      </WeatherText>
    </Weather>
    <svg width="29" height="29" viewBox="0 0 29 29">
      <defs>
        <linearGradient id="win" x1="0" y1="0" x2="1" y2="1">
          <stop offset="0" stopColor="#7fdcff" />
          <stop offset="1" stopColor="#0a91f5" />
        </linearGradient>
      </defs>
      <path d="M1 0h13v14H0V1zM15 0h13l1 1v13H15zM0 15h14v14H1l-1-1zM15 15h14v13l-1 1H15z" fill="url(#win)" />
    </svg>
    <SearchBox>
      <svg width="20" height="20" viewBox="0 0 20 20" fill="none" stroke="#e6e6e6" strokeWidth="2">
        <circle cx="8.500" cy="8.500" r="7" />
        <path d="M13.500 13.500l5 5" strokeWidth="2.600" />
      </svg>
      <Text $ls={-0.5}>Search</Text>
      <svg width="44" height="27" viewBox="0 0 44 27">
        <defs>
          <linearGradient id="screen" x1="0" y1="0" x2="1" y2="1">
            <stop offset="0" stopColor="#d8f1ff" />
            <stop offset="1" stopColor="#79bdf2" />
          </linearGradient>
        </defs>
        <rect x="2" y="1" width="26" height="18" rx="1" fill="#f4f6fa" />
        <rect x="3.500" y="2.500" width="23" height="15" fill="url(#screen)" />
        <path d="M9 6h12v7H9z" fill="#6fadde" />
        <path d="M10 8h10M10 11h10" stroke="#2f78b4" />
        <path d="M2 19h26l2 6H0z" fill="#d5d3dc" />
        <path d="M3 21h24M2.500 23h25" stroke="#9b98a8" strokeDasharray="1.500 .8" />
        <path d="M35.500 13l-2-5M37.500 13V4M38.500 13l3-7" stroke="#d99a3c" strokeWidth="1.600" />
        <path d="M36.500 12l-1.500-6" stroke="#3a8ad0" strokeWidth="1.300" />
        <path d="M40 12l2-5" stroke="#3aa66a" strokeWidth="1.300" />
        <path d="M32.500 12.500h10l-1.500 8.500c0 .8-7 .8-7 0z" fill="#e0423c" />
      </svg>
    </SearchBox>
    <AppIcon>
      <svg width="30" height="28" viewBox="0 0 30 28">
        <defs>
          <linearGradient id="tv" x1="0" y1="0" x2="1" y2="1">
            <stop offset="0" stopColor="#fff" />
            <stop offset="1" stopColor="#dcdcdc" />
          </linearGradient>
        </defs>
        <rect x="7.500" width="22.500" height="20" rx="1" fill="url(#tv)" />
        <rect y="7.500" width="22.500" height="20" rx="1" fill="#7d7d7d" opacity=".8" />
      </svg>
    </AppIcon>
    <AppIcon>
      <svg width="30" height="26" viewBox="0 0 30 26">
        <rect y="1" width="30" height="8" rx="1" fill="#c22a4c" />
        <rect y="9.500" width="30" height="7.500" rx="1" fill="#4a47b8" />
        <rect y="17.500" width="30" height="8" rx="1" fill="#0b8a3a" />
        <path d="M0 3h30M0 12h30M0 20h30" stroke="#fff" strokeOpacity=".25" />
        <path d="M3.500 2v5M3.500 10.500v5M3.500 19v5" stroke="#f6c83c" strokeWidth="2" />
        <rect x="11" width="8.500" height="26" fill="#cf7d1f" />
        <path d="M11 3h8.500M11 6h8.500" stroke="#f0c040" strokeWidth="1.500" />
        <path d="M11 11.500h8.500v5.500H11zM15 13v5" fill="#8b4a12" stroke="#e9e9e9" strokeWidth="1.600" />
      </svg>
    </AppIcon>
    <AppIcon>
      <svg width="29" height="27" viewBox="0 0 29 27">
        <defs>
          <linearGradient id="cp1" x1="0" y1="0" x2=".2" y2="1">
            <stop offset="0" stopColor="#1d76d8" />
            <stop offset=".45" stopColor="#22a6e4" />
            <stop offset=".75" stopColor="#7cc45a" />
            <stop offset="1" stopColor="#f2d321" />
          </linearGradient>
          <linearGradient id="cp2" x1=".6" y1="0" x2=".3" y2="1">
            <stop offset="0" stopColor="#a45cf0" />
            <stop offset=".5" stopColor="#e05a9c" />
            <stop offset="1" stopColor="#ff9a5c" />
          </linearGradient>
        </defs>
        <path d="M15 7h9.500c3 0 4.500 2 3.700 5l-2.700 10c-.8 3-2.300 4.500-5.500 4.500h-7c-3 0-3.500-2-4.500-6.500h2c1.500 0 2-.8 2.400-2.200z" fill="url(#cp2)" />
        <path d="M9.500.5h7c3 0 3.700 1.500 4.500 6h-2.700c-1.500 0-2 1-2.400 2.300l-2.700 9c-.5 1.700-1.200 2.200-2.700 2.200H4C1 20 0 18 .8 15L4 4.500C4.800 1.800 6.500.5 9.500.5z" fill="url(#cp1)" />
        <path d="M16.500.5c3 0 3.700 1.500 4.500 6h-2.700c-1.500 0-2 1-2.400 2.300z" fill="#1a4fc4" />
        <path d="M14 10l-2 7.500c-.3 1-.2 1.700.8 1.700h1.700c1.200 0 1.700-.7 2-1.700L18.500 10c.3-1 .2-1.500-.8-1.500h-1.500c-1.200 0-1.900.5-2.200 1.500z" fill="#202020" />
      </svg>
    </AppIcon>
    <AppIcon $run="#9b9b9b">
      <svg width="30" height="27" viewBox="0 0 30 27">
        <defs>
          <linearGradient id="fold" x1="0" y1="0" x2="1" y2="1">
            <stop offset="0" stopColor="#ffdc70" />
            <stop offset="1" stopColor="#fdbb1c" />
          </linearGradient>
        </defs>
        <path d="M0 1.500C0 .7.700 0 1.500 0h8L13 3.500h10V8H0z" fill="#dc9a08" />
        <path d="M0 5.500h10.500L13 3.500h15.500c.8 0 1.500.7 1.500 1.500v20.500c0 .8-.7 1.500-1.500 1.500h-27C.7 27 0 26.300 0 25.500z" fill="url(#fold)" />
        <path d="M5 27v-5.500c0-1.500 1-2.500 2.500-2.500h15c1.500 0 2.500 1 2.500 2.500V27z" fill="#1272c8" />
        <path d="M9 23h12" stroke="#0b4d92" strokeWidth="1.500" strokeLinecap="round" />
      </svg>
    </AppIcon>
    <AppIcon>
      <svg width="29" height="30" viewBox="0 0 29 30">
        <path d="M8 6V2.500C8 1.700 8.500 1 9.300 1h10.400c.8 0 1.300.7 1.300 1.500V6" fill="none" stroke="#29b0ec" strokeWidth="2" />
        <path d="M0 5h29v20.500c0 2.200-1.500 4-4 4H4c-2.500 0-4-1.800-4-4z" fill="#f3f3f3" />
        <path d="M9 12h5v5H9z" fill="#f25022" />
        <path d="M15 12h5v5h-5z" fill="#7fba00" />
        <path d="M9 18h5v5H9z" fill="#00a4ef" />
        <path d="M15 18h5v5h-5z" fill="#ffb900" />
      </svg>
    </AppIcon>
    <AppIcon>
      <svg width="30" height="29" viewBox="0 0 30 29">
        <defs>
          <linearGradient id="dia">
            <stop offset="0" stopColor="#e53fd0" />
            <stop offset=".45" stopColor="#f80d1c" />
            <stop offset=".65" stopColor="#fb1d08" />
            <stop offset="1" stopColor="#ffae10" />
          </linearGradient>
        </defs>
        <path d="M15 0l15 14.500L15 29 0 14.500z" fill="url(#dia)" />
      </svg>
    </AppIcon>
    <AppIcon>
      <svg width="42" height="42" viewBox="0 0 42 42">
        <circle cx="21" cy="21" r="14" fill="#0c97d5" stroke="#f2f6f8" strokeWidth="2" />
        <path d="M15.500 17c0-4 2.500-6 5.700-6 3.300 0 5.800 1.800 5.800 5 0 4.200-5.500 4.500-5.500 9" fill="none" stroke="#fff" strokeWidth="4" />
        <circle cx="21.300" cy="30" r="2.500" fill="#fff" />
        <circle cx="32" cy="10" r="10" fill="#fdbf0d" />
      </svg>
    </AppIcon>
    <AppIcon>
      <svg width="30" height="30" viewBox="0 0 30 30">
        <defs>
          <linearGradient id="edgeTop" x1="0" y1="0" x2="1" y2=".5">
            <stop offset="0" stopColor="#1a9fe0" />
            <stop offset=".55" stopColor="#33c3d0" />
            <stop offset="1" stopColor="#6be04a" />
          </linearGradient>
          <linearGradient id="edgeBody" x1="0" y1="0" x2="0" y2="1">
            <stop offset="0" stopColor="#1796e0" />
            <stop offset="1" stopColor="#0b63c4" />
          </linearGradient>
        </defs>
        <path d="M.3 12C1 20 3 30 15 30c5.500 0 10-2.500 12.700-7-1.500.5-4 1.200-6.700 1-3 0-6-4-6-8L11 8z" fill="url(#edgeBody)" />
        <path d="M12 13.500c-4 4.500-3 12.500 4 16.300 5-.3 9.500-3 11.700-6.800.3-.7-.2-1-1-.6C20 25.500 11.500 21 12 13.500z" fill="#0d4a96" />
        <path d="M.2 13.500C1 5.500 7.500 0 15 0c8.500 0 15 6 15 12.500 0 4.500-3.500 7-7.500 7-3 0-5-1-5-2.200 0-.8 1.200-1.400 1.200-3.500C18.700 11 15.500 8 11 8 6.500 8 2 9.500.2 13.500z" fill="url(#edgeTop)" />
      </svg>
    </AppIcon>
    <AppIcon $active $run="#4cc2ff">
      <svg width="48" height="48" viewBox="0 0 48 48">
        <path d="M24 24L11 16.500A15 15 0 0 1 37 16.500z" fill="#e33b2e" />
        <path d="M24 24l13-7.500A15 15 0 0 1 24 39l0-15z" fill="#fbc116" />
        <path d="M24 24v15A15 15 0 0 1 11 16.500z" fill="#1e9e4a" />
        <path d="M24 39l6.500-11.200L24 24z" fill="#fbc116" />
        <circle cx="24" cy="24" r="7.200" fill="#fff" />
        <circle cx="24" cy="24" r="5.800" fill="#2b7de9" />
        <g transform="translate(25 3)">
          <Panda r={10} />
        </g>
      </svg>
    </AppIcon>
    <Tray>
      <svg width="14" height="8" viewBox="0 0 14 8" fill="none" stroke="#fff" strokeWidth="2">
        <path d="M1 7l6-5.500L13 7" />
      </svg>
      <svg width="67" height="20" viewBox="0 0 67 20">
        <path d="M27 17.500c-3 0-4.500-2-4.500-4.300S24.300 9 26.500 9c.8-3.500 3-5.500 6-5.500 3.200 0 5.500 2 6 5 2.500.2 4 2 4 4.300 0 2.700-1.700 4.700-4.500 4.700z" fill="#8d8d8d" />
        <path d="M24.500 2.500L40 17.500" stroke="#202020" strokeWidth="3.500" />
        <path d="M25 3l16.500 15.500" stroke="#d8d8d8" strokeWidth="1.300" />
      </svg>
      <TrayText $align="center" $ml={-6} $up={2}>
        <Text $ls={-0.5}>ENG</Text>
        <Text $ls={-0.5}>IN</Text>
      </TrayText>
      <Spacer $w={17} />
      <svg width="20" height="16" viewBox="0 0 20 16" fill="none" stroke="#fff" strokeWidth="1.600">
        <path d="M.8 6a13 13 0 0 1 18.400 0M3.600 8.900a9 9 0 0 1 12.800 0M6.300 11.600a5.200 5.200 0 0 1 7.400 0" />
        <circle cx="10" cy="14" r="1.300" fill="#fff" />
      </svg>
      <svg width="30" height="18" viewBox="0 0 30 18" fill="none" stroke="#fff" strokeWidth="1.500">
        <path d="M10.700 6.300h3L18.500 2v14l-4.800-4.300h-3zM21.500 6a5 5 0 0 1 0 6M24 3.500a8.500 8.500 0 0 1 0 11M26.500 1a12 12 0 0 1 0 16" />
      </svg>
      <svg width="30" height="18" viewBox="0 0 30 18">
        <rect x="10.800" y="4" width="16" height="11.200" rx="2.800" fill="none" stroke="#fff" strokeWidth="1.600" />
        <rect x="13" y="6" width="11.700" height="7.200" rx="1" fill="#fff" />
        <rect x="27.500" y="7.300" width="2.300" height="4.500" rx="1" fill="#fff" />
        <path d="M13.500 0L9 6h3l-1.500 5L16 4.500h-3z" fill="#fff" stroke="#202020" strokeWidth=".8" />
      </svg>
      <TrayText $align="right" $ml={0} $up={4}>
        <Text $ls={-0.33}>08:58 PM</Text>
        <Text $ls={-0.13}>01-08-2025</Text>
      </TrayText>
    </Tray>
  </Taskbar>
);

export default function App() {
  return (
    <Screen>
      <GlobalStyle />
      <Browser />
      <Header />
      <Body>
        <SideNav />
        <Content />
        <ChatButton />
      </Body>
      <WindowsTaskbar />
    </Screen>
  );
}
